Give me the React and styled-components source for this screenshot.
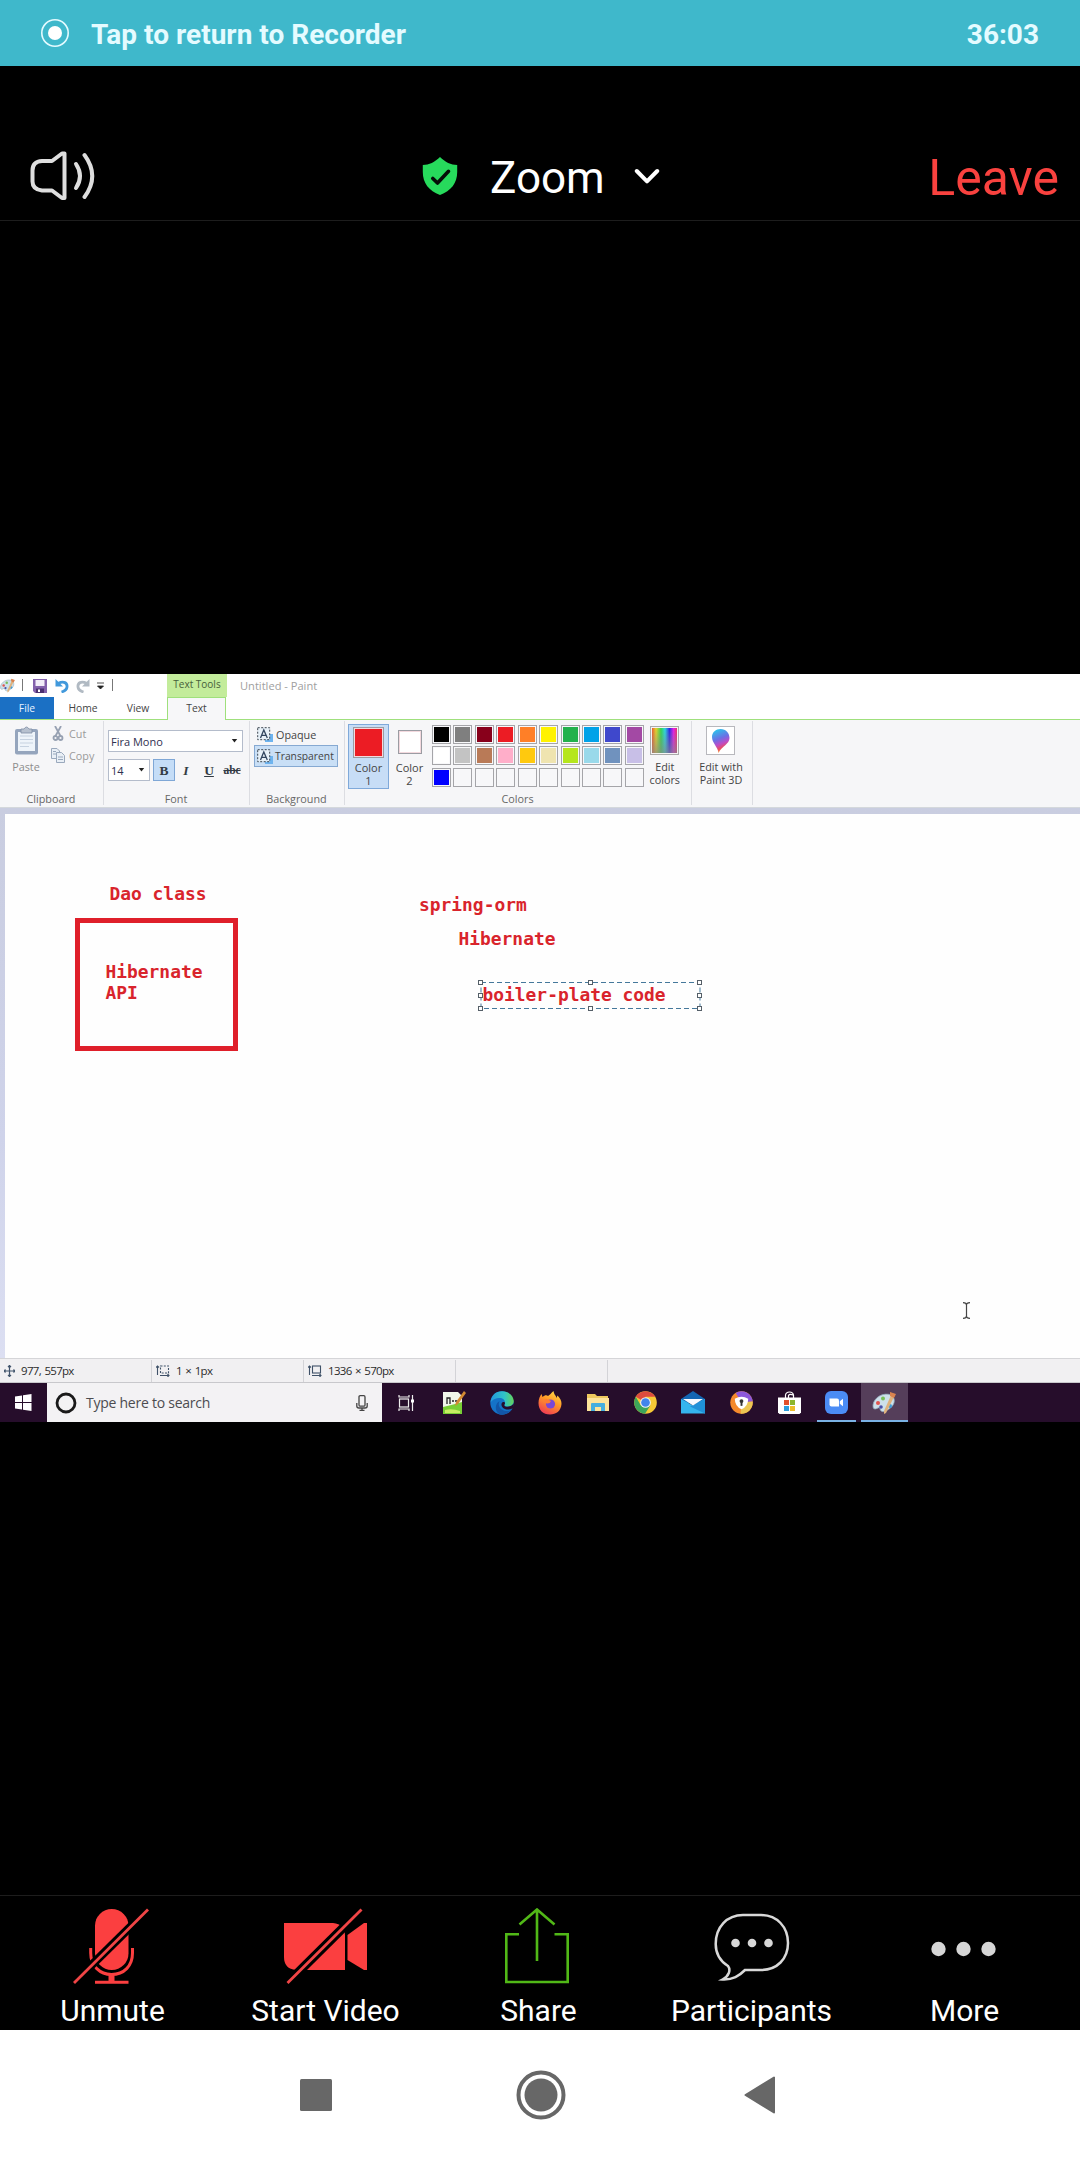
import React from 'react';
import styled, { createGlobalStyle, css } from 'styled-components';

const Global = createGlobalStyle`
  * { box-sizing: border-box; }
  body { margin: 0; background: #000; }
  svg { display: block; flex: none; }
`;

const Screen = styled.div`
  width: 1080px;
  height: 2160px;
  display: flex;
  flex-direction: column;
  background: #000;
  color: #fff;
  font-family: Roboto, sans-serif;
  overflow: hidden;
`;

/* ---------- recorder banner ---------- */
const Banner = styled.div`
  height: 66px;
  flex: none;
  display: flex;
  align-items: center;
  padding: 2px 41px 0 40px;
  background: #3fb8cb;
  color: #e4fbff;
  font-size: 28px;
  font-weight: 700;
`;
const BannerText = styled.span`
  flex: 1;
  padding-left: 21px;
  letter-spacing: 0.02px;
`;

/* ---------- meeting header ---------- */
const Header = styled.header`
  height: 155px;
  flex: none;
  display: grid;
  grid-template-columns: 300px 1fr 300px;
  align-items: center;
  padding: 66px 21px 0 29px;
  border-bottom: 1px solid #1d1d1d;
`;
const Title = styled.div`
  display: flex;
  align-items: center;
  padding-left: 93px;
  font-size: 44px;
  line-height: 50px;
`;
const TitleText = styled.span`
  padding: 4px 29px 0 32px;
`;
const Leave = styled.div`
  text-align: right;
  color: #f9423f;
  font-size: 50px;
  line-height: 58px;
  padding-top: 4px;
`;

const Gap = styled.div`
  height: ${(p) => p.$h}px;
  flex: none;
`;

/* ---------- shared Paint window ---------- */
const PaintWindow = styled.div`
  flex: none;
  color: #444;
  background: #fff;
  font-family: "Open Sans", "Noto Sans", sans-serif;
  font-size: 10.8px;
  line-height: 13px;
  white-space: nowrap;
`;
const TitleRow = styled.div`
  height: 23px;
  display: flex;
  align-items: center;
`;
const Tick = styled.i`
  width: 1px;
  height: 12px;
  background: #777;
  margin: 0 ${(p) => p.$r}px 2px ${(p) => p.$l}px;
`;
const Slot = styled.div`
  width: ${(p) => p.$w}px;
  display: flex;
  justify-content: flex-start;
`;
const ContextTitle = styled.div`
  width: 60px;
  height: 23px;
  text-align: center;
  line-height: 20px;
  font-size: 10px;
  background: #c3ec9b;
  color: #46603a;
`;
const WindowTitle = styled.div`
  padding-left: 13px;
  font-size: 11.1px;
  color: #a0a0a0;
`;
const Tabs = styled.div`
  height: 23px;
  display: flex;
  align-items: stretch;
  border-bottom: 1px solid #9fe07c;
`;
const Tab = styled.div`
  width: ${(p) => p.$w}px;
  text-align: center;
  line-height: 22px;
  font-size: 10.3px;
  ${(p) => p.$kind === 'file' && css`
    background: #1b70c4;
    color: #e5f2ff;
  `}
  ${(p) => p.$kind === 'active' && css`
    margin: 0 0 -1px 3px;
    background: #f7f7f9;
    border: 1px solid #9fe07c;
    border-bottom: 0;
    line-height: 21px;
  `}
`;
const Ribbon = styled.div`
  height: 88px;
  display: flex;
  background: #f6f6f8;
  border-bottom: 1px solid #d4d8dc;
  padding: 1px 0 2px;
`;
const Group = styled.div`
  width: ${(p) => p.$w}px;
  flex: none;
  display: flex;
  flex-direction: column;
  border-right: 1px solid #dcdde2;
`;
const GroupBody = styled.div`
  flex: 1;
  display: flex;
  gap: ${(p) => p.$gap || 0}px;
  flex-direction: ${(p) => (p.$col ? 'column' : 'row')};
  padding: ${(p) => p.$pad};
`;
const GroupLabel = styled.div`
  height: 13px;
  text-align: center;
  color: #666;
  padding-right: 1px;
`;
const ToolStack = styled.div`
  width: ${(p) => p.$w}px;
  margin-top: ${(p) => p.$mt || 0}px;
  display: flex;
  flex-direction: column;
  align-items: center;
  gap: ${(p) => p.$gap || 0}px;
  text-align: center;
  line-height: 12.5px;
  color: ${(p) => p.$color || '#444'};
`;
const SmallTools = styled.div`
  display: flex;
  flex-direction: column;
  gap: 7px;
  padding-left: 7px;
  color: #9a9a9a;
`;
const SmallTool = styled.div`
  height: 15px;
  display: flex;
  align-items: center;
  gap: 4px;
`;
const Row = styled.div`
  display: flex;
  align-items: center;
`;
const Select = styled.div`
  width: ${(p) => p.$w}px;
  height: 22px;
  display: flex;
  align-items: center;
  justify-content: space-between;
  padding: 0 4px 0 2px;
  border: 1px solid #b4bccb;
  background: #fff;
  color: #2f3050;
  font-size: 11px;
`;
const FormatButton = styled.div`
  width: ${(p) => p.$w}px;
  height: 22px;
  display: flex;
  align-items: center;
  justify-content: center;
  font-family: "Liberation Serif", serif;
  font-weight: 700;
  font-size: ${(p) => p.$size || 13.5}px;
  font-style: ${(p) => (p.$italic ? 'italic' : 'normal')};
  text-decoration: ${(p) => p.$deco || 'none'};
  color: #333b44;
  ${(p) => p.$on && css`
    background: #c5ddf7;
    border: 1px solid #7fa7d6;
    margin-left: 3px;
  `}
`;
const Choice = styled.div`
  width: 84px;
  height: 22px;
  display: flex;
  align-items: center;
  gap: ${(p) => (p.$on ? 2 : 3)}px;
  padding-left: 2px;
  border: 1px solid ${(p) => (p.$on ? '#86a9d2' : 'transparent')};
  background: ${(p) => (p.$on ? '#c9dff6' : 'transparent')};
  font-size: ${(p) => (p.$on ? 10.3 : 10.8)}px;
`;
const ColorSlot = styled.div`
  width: 41px;
  height: 65px;
  display: flex;
  flex-direction: column;
  align-items: center;
  text-align: center;
  line-height: 12.5px;
  font-size: 11px;
  border: 1px solid ${(p) => (p.$on ? '#7fa9da' : 'transparent')};
  background: ${(p) => (p.$on ? '#c7ddf6' : 'transparent')};
`;
const BigSwatch = styled.div`
  width: ${(p) => p.$s}px;
  height: ${(p) => p.$s}px;
  margin: ${(p) => p.$m};
  border: 1px solid #9b9ca3;
  background: ${(p) => p.$c};
  box-shadow: inset 0 0 0 1px #f3d9de;
`;
const Palette = styled.div`
  display: grid;
  grid-template-columns: repeat(10, 19px);
  grid-auto-rows: 19px;
  gap: 2.43px;
  margin: 1px 2px 0 2px;
  align-content: start;
`;
const Swatch = styled.div`
  border: 1px solid #a5a5a9;
  background: ${(p) => p.$c};
  box-shadow: inset 0 0 0 1px #f8f8fa;
`;
const Workspace = styled.div`
  position: relative;
  height: 550px;
  padding: 6px 0 0 5px;
  background: linear-gradient(#c9cde0, #cfd3ea 60%, #dcdff2);
`;
const Sheet = styled.div`
  height: 100%;
  background: #fefefe;
`;
const CanvasText = styled.div`
  position: absolute;
  left: ${(p) => p.$x}px;
  top: ${(p) => p.$y}px;
  font: 700 17.9px/21.5px "DejaVu Sans Mono", monospace;
  color: #d9242c;
  white-space: pre;
`;
const CanvasBox = styled.div`
  position: absolute;
  left: 75px;
  top: 110px;
  width: 163px;
  height: 133px;
  border: 5px solid #df1f2a;
`;
const Overlay = styled.svg`
  position: absolute;
  left: ${(p) => p.$x}px;
  top: ${(p) => p.$y}px;
`;
const StatusBar = styled.div`
  height: 25px;
  display: flex;
  align-items: center;
  background: #f1f0f2;
  border-top: 1px solid #d5d5d8;
  border-bottom: 1px solid #c8c8cc;
  color: #2c2c2c;
  font-size: 11.5px;
  letter-spacing: -0.7px;
  word-spacing: 1.2px;
`;
const StatusCell = styled.div`
  width: ${(p) => p.$w}px;
  height: 22px;
  display: flex;
  align-items: center;
  gap: 6px;
  padding-left: 4px;
  border-right: 1px solid #d3d3d7;
`;
const Taskbar = styled.div`
  height: 39px;
  display: flex;
  background: #260d2b;
`;
const StartButton = styled.div`
  width: 47px;
  display: grid;
  place-items: center;
`;
const Search = styled.div`
  width: 335px;
  display: flex;
  align-items: center;
  padding: 0 14px 0 8px;
  background: #f3f2f4;
  color: #4c4c50;
  font-size: 14px;
  letter-spacing: -0.25px;
`;
const SearchText = styled.span`
  flex: 1;
  padding-left: 9px;
`;
const TaskItem = styled.div`
  width: ${(p) => p.$w || 47.9}px;
  display: grid;
  place-items: center;
  background: ${(p) => (p.$on ? '#553e5a' : 'transparent')};
  box-shadow: ${(p) => (p.$running ? 'inset 0 -2px #7ab2e4' : 'none')};
  margin: 0 ${(p) => p.$m || 0}px;
`;

/* ---------- meeting controls ---------- */
const Controls = styled.div`
  height: 135px;
  flex: none;
  display: flex;
  padding: 12px 9px 0 6px;
  border-top: 1px solid #1d1d1d;
`;
const Control = styled.div`
  width: 213px;
  display: flex;
  flex-direction: column;
  align-items: center;
  font-size: 30px;
  line-height: 36px;
`;
const ControlIcon = styled.div`
  padding-right: ${(p) => p.$nudge}px;
`;
const ControlLabel = styled.span`
  margin-top: 9px;
`;
const NavBar = styled.nav`
  flex: 1;
  display: flex;
  align-items: center;
  justify-content: center;
  background: #fff;
  padding: 0 9px 0 0;
`;
const NavButton = styled.div`
  width: ${(p) => p.$w}px;
  display: flex;
  justify-content: center;
`;

/* ---------- icons ---------- */
const RecordIcon = () => (
  <svg width="30" height="30" viewBox="0 0 30 30">
    <circle cx="15" cy="14" r="13.2" fill="none" stroke="#e4fbff" strokeWidth="1.6" />
    <circle cx="15" cy="14" r="7" fill="#fff" />
  </svg>
);
const SpeakerIcon = () => (
  <svg width="68" height="54" viewBox="0 0 68 54" fill="none" stroke="#dedede" strokeWidth="4" strokeLinecap="round" strokeLinejoin="round">
    <path d="M35.500 4.500 L33 4.500 L23 12 L13 12 Q3.500 12.500 3.500 21.500 L3.500 32.500 Q3.500 40.500 13 41.500 L23 41.500 L33 49 L35.500 49 Z" />
    <path d="M47 15 Q55 27 47 39" />
    <path d="M55.500 6 Q71 27 55.500 48" />
  </svg>
);
const ShieldIcon = () => (
  <svg width="36" height="38" viewBox="0 0 36 38">
    <path d="M18 0 C13 5 7 8 .8 8 V15 C.8 26 7 34 18 38 C29 34 35.200 26 35.200 15 V8 C29 8 23 5 18 0Z" fill="#27da5c" />
    <path d="M10.800 21.500 L15.500 26 L26.500 14.300" fill="none" stroke="#050d07" strokeWidth="3.600" strokeLinecap="round" strokeLinejoin="round" />
  </svg>
);
const ChevronIcon = () => (
  <svg width="26" height="18" viewBox="0 0 26 18">
    <path d="M2.800 4 L13 14.300 L23.200 4" fill="none" stroke="#fff" strokeWidth="4" strokeLinecap="round" strokeLinejoin="round" />
  </svg>
);
const Caret = () => (
  <svg width="7" height="4" viewBox="0 0 7 4"><path d="M.8 0H6.200L3.500 3.500Z" fill="#222" /></svg>
);
const PaletteIcon = ({ w = 24, h = 24, cut = 0 }) => (
  <svg width={w} height={h} viewBox={`${cut} 0 ${24 - cut} 24`}>
    <path d="M1 14 C2 6 12 1 19 4 C25 8 22 15 17 18 C13 21 9 22 8 18 C8 15 5 18 3 18 C1 18 1 16 1 14Z" fill="#cde0ea" stroke="#8ba5b5" strokeWidth=".8" />
    <circle cx="6" cy="12" r="2" fill="#e2564f" />
    <circle cx="11" cy="7.500" r="2" fill="#78bf59" />
    <circle cx="9" cy="16" r="1.800" fill="#4a4fa8" />
    <circle cx="18" cy="15" r="2" fill="#3d9bd8" />
    <path d="M20 2 L23 4 L14 22 L12 23 L12 20Z" fill="#dfb27d" />
    <path d="M18 1 L24 3 L22 7 L18 5Z" fill="#d9834f" />
  </svg>
);
const SaveIcon = () => (
  <svg width="14" height="14" viewBox="0 0 14 14">
    <path d="M0 0H14V14H2L0 12Z" fill="#8361ab" /><path d="M2.500 1H11.500V7H2.500Z" fill="#f2edf8" /><path d="M3 9.500H11V14H3Z" fill="#4b3070" /><path d="M5 10.500H7V13H5Z" fill="#fff" />
  </svg>
);
const UndoIcon = ({ flip }) => (
  <svg width="14" height="14" viewBox="0 0 14 14">
    <g transform={flip ? 'matrix(-1 0 0 1 14 0)' : undefined} fill="none" stroke={flip ? '#b1bac3' : '#4199dc'}>
      <path d="M3 4.500 C9 1.500 12.500 4 12 8 C11.700 10.500 10 12 6.500 13" strokeWidth="2.800" />
      <path d="M.5 0 V7.500 H8Z" stroke="none" fill={flip ? '#b1bac3' : '#4199dc'} />
    </g>
  </svg>
);
const ClipboardIcon = () => (
  <svg width="25" height="30" viewBox="0 0 25 30">
    <rect x="1" y="3" width="23" height="25.500" rx="2" fill="#95a5bd" />
    <rect x="4" y="6" width="17" height="19" fill="#eef4fa" />
    <path d="M6 10H19M6 13.500H19M6 17H19M6 20.500H15" stroke="#c6d2e0" />
    <path d="M7 7V3H10Q12.500 -1 15 3H18V7Z" fill="#b7c1cf" stroke="#7f8da3" strokeWidth=".8" />
  </svg>
);
const ScissorsIcon = () => (
  <svg width="14" height="15" viewBox="0 0 14 15" fill="none" stroke="#97a1b2" strokeWidth="1.800">
    <path d="M4 0 L9.500 10 M10 0 L4.500 10" /><circle cx="4.500" cy="12" r="2" /><circle cx="9.500" cy="12" r="2" />
  </svg>
);
const CopyIcon = () => (
  <svg width="14" height="15" viewBox="0 0 14 15" fill="#e9eff6" stroke="#9aa9bd" strokeWidth="1">
    <path d="M.5 .5H6L8.500 3V10.500H.5Z" /><path d="M5.500 4.500H10.500L13.500 7.500V14.500H5.500Z" /><path d="M2 3.500H5M2 6H5M7 9H12M7 11.500H12" />
  </svg>
);
const BackgroundIcon = () => (
  <svg width="16" height="15" viewBox="0 0 16 15">
    <rect x="8" y="7" width="8" height="8" fill="#6eb4ef" />
    <rect x=".7" y=".7" width="12" height="12" fill="#e8f1f8" stroke="#3c4650" strokeDasharray="2 1.500" />
    <path d="M3.500 11 L6.800 3 L10.300 11 M4.700 8.400H9" fill="none" stroke="#33465f" strokeWidth="1.300" />
  </svg>
);
const SpectrumIcon = () => (
  <svg width="29" height="30" viewBox="0 0 29 30">
    <defs>
      <linearGradient id="hue"><stop stopColor="#ef5b2d" /><stop offset=".16" stopColor="#e6d32b" /><stop offset=".36" stopColor="#31d651" /><stop offset=".52" stopColor="#2ad8e0" /><stop offset=".7" stopColor="#2d24e8" /><stop offset=".86" stopColor="#e31de8" /><stop offset="1" stopColor="#ee2d6a" /></linearGradient>
      <linearGradient id="fade" x2="0" y2="1"><stop stopColor="#888" stopOpacity="0" /><stop offset="1" stopColor="#888" stopOpacity=".7" /></linearGradient>
    </defs>
    <rect x=".5" y=".5" width="28" height="28" fill="#f4f4f4" stroke="#aaa" />
    <rect x="2" y="2" width="25" height="25" fill="url(#hue)" /><rect x="2" y="2" width="25" height="25" fill="url(#fade)" />
  </svg>
);
const Paint3DIcon = () => (
  <svg width="30" height="30" viewBox="0 0 30 30">
    <defs><linearGradient id="drop" x1=".3" x2=".6" y2="1"><stop stopColor="#29c5ec" /><stop offset=".4" stopColor="#6b70e5" /><stop offset=".62" stopColor="#bd4cc8" /><stop offset=".8" stopColor="#e94c60" /><stop offset="1" stopColor="#f7c52d" /></linearGradient></defs>
    <rect x=".5" y=".5" width="28" height="28" fill="#fff" stroke="#b8b8bd" />
    <path d="M14.500 3 C20 3 23.500 7 23.500 12 C23.500 18 16 20 12.500 27 C12 21 6 17 6 11 C6 6 10 3 14.500 3Z" fill="url(#drop)" />
  </svg>
);
const MoveIcon = () => (
  <svg width="11" height="12" viewBox="0 0 11 12" stroke="#41546c" strokeWidth="1.200" fill="none"><path d="M5.500 .5V11.500M0 6H11M4 2L5.500 .5L7 2M4 10L5.500 11.500L7 10M1.500 4.500L0 6L1.500 7.500M9.500 4.500L11 6L9.500 7.500" /></svg>
);
const SizeIcon = ({ dashed }) => (
  <svg width="14" height="12" viewBox="0 0 14 12" stroke="#3f5168" strokeWidth="1.100" fill="none"><path d="M1.500 10V1M0 2.500L1.500 1L3 2.500M4 10.500H13M11.500 9L13 10.500L11.500 12" /><rect x="4.500" y="1" width="8" height="7" strokeDasharray={dashed ? '2 1.300' : undefined} /></svg>
);
const WindowsIcon = () => (
  <svg width="17" height="17" viewBox="0 0 17 17" fill="#fff"><path d="M0 2.500L7 1.500V8H0ZM8 1.300L16.500 0V8H8ZM0 9H7V15.500L0 14.500ZM8 9H16.500V17L8 15.700Z" /></svg>
);
const CortanaIcon = () => (
  <svg width="22" height="22" viewBox="0 0 22 22"><circle cx="11" cy="11" r="9" fill="none" stroke="#1a1a1a" strokeWidth="2.800" /></svg>
);
const SearchMicIcon = () => (
  <svg width="12" height="16" viewBox="0 0 12 16" fill="none" stroke="#444" strokeWidth="1.300"><rect x="3" y=".7" width="6" height="10.500" rx="1.200" /><path d="M.8 8V11Q.8 13 3 13H9Q11.200 13 11.200 11V8M6 13V15.500M3.500 15.300H8.500" /></svg>
);
const TaskViewIcon = () => (
  <svg width="17" height="16" viewBox="0 0 17 16" fill="none" stroke="#eee" strokeWidth="1.200"><rect x="1.500" y="4" width="9" height="8" /><path d="M1 0V2H11V0M1 16V14H11V16M14.500 0V16" /><path d="M13 4.500H16V7.500H13Z" fill="#fff" stroke="none" /></svg>
);
const NotepadIcon = () => (
  <svg width="24" height="25" viewBox="0 0 24 25"><path d="M1 2H16L20 6V24H1Z" fill="#f1f6ea" /><path d="M1 17Q10 15 20 12V24H1Z" fill="#79cf35" /><path d="M3 20Q10 18 18 21V23H3Z" fill="#c6ee62" /><path d="M5 14V8H8V14M10 11H12M13 11H15.500" stroke="#222" strokeWidth="1.300" fill="none" /><path d="M22 1L24 3L16 14L13 16L14 12Z" fill="#d28a32" /></svg>
);
const EdgeIcon = () => (
  <svg width="24" height="24" viewBox="0 0 24 24">
    <defs><linearGradient id="edgeTop"><stop stopColor="#2497dc" /><stop offset=".6" stopColor="#2fc3c8" /><stop offset="1" stopColor="#65d35a" /></linearGradient></defs>
    <circle cx="12" cy="12" r="11.700" fill="#1473c8" />
    <path d="M.5 12 C1 4 6 .3 12 .3 C19 .3 23.700 5 23.700 10 C23.700 14 20 16 16.500 15.500 C14 15.200 14 14 15 12.500 C15.500 9 12.500 6.500 8.500 7 C4 7.500 1 10 .5 12Z" fill="url(#edgeTop)" />
    <path d="M10 23.500 C4 21 5 12 9.500 10.300 C7 15 11 20 17 20 C19.500 20 21.500 19 22.500 17.500 C20 22 15 24 10 23.500Z" fill="#1256a8" />
    <path d="M15 12.500 C14 14 14 15.400 16.500 15.700 C20 16 22 14.500 23.700 12.500 C24 15 23.300 16.500 22.800 17.300 C18 20 11 18 11.500 13 C12 10.500 15 10.500 15 12.500Z" fill="#260d2b" />
  </svg>
);
const FirefoxIcon = () => (
  <svg width="24" height="25" viewBox="0 0 24 25">
    <defs><linearGradient id="fox" x1=".8" x2=".3" y2="1"><stop stopColor="#ffe14a" /><stop offset=".45" stopColor="#ff9826" /><stop offset="1" stopColor="#f03a55" /></linearGradient></defs>
    <path d="M15.500 1 C16 5 18 5 18.500 8 L19.500 5.500 C22 8 23.700 11 23.500 14 C23 21 18 24.500 12 24.500 C5 24.500 .5 20 .5 13 C.5 9 2 6 3.500 4 L4.500 7 C7 4.500 9 5 10 6 C12 5 13 3 15.500 1Z" fill="url(#fox)" />
    <circle cx="12.500" cy="14" r="4.600" fill="#7a48d5" /><path d="M5.500 10 Q9 8 13 11 Q12 14 8.500 13.500Z" fill="#ff7d32" />
  </svg>
);
const FolderIcon = () => (
  <svg width="22" height="19" viewBox="0 0 22 19"><path d="M0 1H8L10 3H21V17H0Z" fill="#eec85e" /><path d="M0 5H22V18H0Z" fill="#fde39a" /><path d="M4 18V11Q4 10 5 10H17Q18 10 18 11V18H14V14H8V18Z" fill="#45aede" /></svg>
);
const ChromeIcon = () => (
  <svg width="23" height="23" viewBox="0 0 24 24"><circle cx="12" cy="12" r="11.800" fill="#f6c936" /><path d="M12 12L1.800 6.100A11.800 11.800 0 0 1 22.200 6.100H12Z" fill="#dd4b3e" /><path d="M1.800 6.100A11.800 11.800 0 0 0 11.500 23.800L17 15L12 12L7 14.800Z" fill="#3ca55a" /><circle cx="12" cy="12" r="5.600" fill="#f3f3f3" /><circle cx="12" cy="12" r="4.500" fill="#4285eb" /></svg>
);
const MailIcon = () => (
  <svg width="24" height="23" viewBox="0 0 24 23"><path d="M0 8L12 0L24 8V12H0Z" fill="#1266b2" /><path d="M0 8L12 14.500L24 8V22.500H0Z" fill="#35b5ee" /><path d="M24 8L9 15.500L24 22.500Z" fill="#1f91d8" /><path d="M2 8H22L12 14.500Z" fill="#f5faff" /></svg>
);
const GuardIcon = () => (
  <svg width="23" height="23" viewBox="0 0 24 24"><circle cx="12" cy="12" r="11.700" fill="#f58a2c" /><path d="M6 2A11.700 11.700 0 0 1 23.700 11L12 12Z" fill="#8d58db" /><path d="M23.700 11A11.700 11.700 0 0 1 11 23.700L12 12Z" fill="#ecc653" /><path d="M5 8Q12 4 19 8Q19 16 12 19Q5 16 5 8Z" fill="#fff" /><circle cx="12" cy="10.500" r="2" fill="#333" /><path d="M11 11H13V15.500H11Z" fill="#333" /></svg>
);
const StoreIcon = () => (
  <svg width="23" height="24" viewBox="0 0 23 24"><path d="M7.500 7V4Q8 1 11.500 1Q15 1 15.500 4V7M10.500 7V4.500Q11.500 2.500 15 4" fill="none" stroke="#fff" strokeWidth="1.200" /><path d="M0 6.500H23V21.500L21.500 23H1.500L0 21.500Z" fill="#fff" /><path d="M6 9H11V14H6Z" fill="#e1502b" /><path d="M12 9H17V14H12Z" fill="#8cb52c" /><path d="M6 15H11V20H6Z" fill="#2b9ddd" /><path d="M12 15H17V20H12Z" fill="#edbd2b" /></svg>
);
const ZoomIcon = () => (
  <svg width="23" height="23" viewBox="0 0 23 23"><rect width="23" height="23" rx="6" fill="#4b8cf5" /><path d="M4.500 7.500H12Q14 7.500 14 9.500V15.500H6.500Q4.500 15.500 4.500 13.500Z" fill="#fff" /><path d="M14.800 10.300L18 7.800V15.200L14.800 12.800Z" fill="#fff" /></svg>
);
const MutedMicIcon = () => (
  <svg width="76" height="76" viewBox="0 0 76 76">
    <rect x="22" y="1" width="33.500" height="61" rx="16.700" fill="#fb3f40" />
    <g fill="none" stroke="#fb3f40">
      <path d="M17.700 40V45C17.700 58 27 66.500 38.500 66.500C51 66.500 59.500 58 59.500 45V40" strokeWidth="3" />
      <path d="M38.500 66V74" strokeWidth="6" />
    </g>
    <path d="M5 70.500L71 5.500" stroke="#000" strokeWidth="8.500" />
    <path d="M1 75L75 1.500" stroke="#f04546" strokeWidth="2.800" />
    <path d="M22 74.300H55.500" stroke="#fb3f40" strokeWidth="3" />
  </svg>
);
const VideoOffIcon = () => (
  <svg width="84" height="76" viewBox="0 0 84 76">
    <path d="M0 15H49Q61 16 61 27V62H12Q0 61 0 49Z" fill="#fb3f40" />
    <path d="M3.500 75L77.500 1.500" stroke="#000" strokeWidth="9" />
    <path d="M63.500 27L80 15H83V62H80L63.500 52Z" fill="#fb3f40" />
    <path d="M3.500 75L77.500 1.500" stroke="#f04546" strokeWidth="2.800" />
  </svg>
);
const ShareIcon = () => (
  <svg width="64" height="76" viewBox="0 0 64 76" fill="none" stroke="#51b817" strokeWidth="2.600"><path d="M14 26.300H1.300V74H62.700V26.300H49.500M32 53V1.500M14.500 16.500L32 1.500L49.500 16.500" /></svg>
);
const ChatIcon = () => (
  <svg width="76" height="76" viewBox="0 0 76 76" fill="none" stroke="#d8d8d8" strokeWidth="2.500">
    <path d="M29 7H47C63 7 74 19 74 35C74 51 63 62 47 62H31C25 68 19 72 8.500 71.500C15 68 17 62 14 58C6 53 1.700 45 1.700 36C1.700 19 13 7 29 7Z" />
    <g fill="#d8d8d8" stroke="none"><circle cx="21.500" cy="35" r="4.300" /><circle cx="38" cy="35" r="4.300" /><circle cx="54.500" cy="35" r="4.300" /></g>
  </svg>
);
const MoreIcon = () => (
  <svg width="66" height="76" viewBox="0 0 66 76" fill="#d6d6d6"><circle cx="7.500" cy="41" r="7.200" /><circle cx="32.500" cy="41" r="7.200" /><circle cx="57.500" cy="41" r="7.200" /></svg>
);

const COLORS = [
  '#000000', '#7f7f7f', '#88001b', '#ec1c24', '#ff7f27', '#fff200', '#22b14c', '#00a2e8', '#3f48cc', '#a349a4',
  '#ffffff', '#c3c3c3', '#b97a57', '#ffaec9', '#ffc90e', '#efe4b0', '#b5e61d', '#99d9ea', '#7092be', '#c8bfe7',
  '#0000ff', ...Array(9).fill('#f7f7f9'),
];
const APPS = [NotepadIcon, EdgeIcon, FirefoxIcon, FolderIcon, ChromeIcon, MailIcon, GuardIcon, StoreIcon];
const CONTROLS = [
  ['Unmute', MutedMicIcon, 2.5],
  ['Start Video', VideoOffIcon, 0],
  ['Share', ShareIcon, 3],
  ['Participants', ChatIcon, 0],
  ['More', MoreIcon, 2],
];
const HANDLES = [[3, 3], [113, 3], [222, 3], [3, 16], [222, 16], [3, 29], [113, 29], [222, 29]];

export default function App() {
  return (
    <Screen>
      <Global />
      <Banner>
        <RecordIcon />
        <BannerText>Tap to return to Recorder</BannerText>
        <span>36:03</span>
      </Banner>
      <Header>
        <SpeakerIcon />
        <Title>
          <ShieldIcon />
          <TitleText>Zoom</TitleText>
          <ChevronIcon />
        </Title>
        <Leave>Leave</Leave>
      </Header>
      <Gap $h={453} />

      <PaintWindow>
        <TitleRow>
          <Slot $w={16}><PaletteIcon w={16} h={15} cut={2} /></Slot>
          <Tick $l={6} $r={10} />
          <Slot $w={22}><SaveIcon /></Slot>
          <Slot $w={21}><UndoIcon /></Slot>
          <Slot $w={21}><UndoIcon flip /></Slot>
          <svg width="7" height="8" viewBox="0 0 7 8"><path d="M0 1H7M.5 4H6.500L3.500 7Z" fill="#222" stroke="#222" strokeWidth=".8" /></svg>
          <Tick $l={8} $r={54} />
          <ContextTitle>Text Tools</ContextTitle>
          <WindowTitle>Untitled - Paint</WindowTitle>
        </TitleRow>
        <Tabs>
          <Tab $w={54} $kind="file">File</Tab>
          <Tab $w={58}>Home</Tab>
          <Tab $w={52}>View</Tab>
          <Tab $w={59} $kind="active">Text</Tab>
        </Tabs>
        <Ribbon>
          <Group $w={104}>
            <GroupBody $pad="5px 0 0 8px">
              <ToolStack $w={36} $gap={5} $color="#8d8d8d"><ClipboardIcon /><span>Paste</span></ToolStack>
              <SmallTools>
                <SmallTool><ScissorsIcon />Cut</SmallTool>
                <SmallTool><CopyIcon />Copy</SmallTool>
              </SmallTools>
            </GroupBody>
            <GroupLabel>Clipboard</GroupLabel>
          </Group>
          <Group $w={146}>
            <GroupBody $col $gap={7} $pad="9px 0 0 4px">
              <Select $w={135}>Fira Mono<Caret /></Select>
              <Row>
                <Select $w={42}>14<Caret /></Select>
                <FormatButton $w={22} $on>B</FormatButton>
                <FormatButton $w={22} $italic>I</FormatButton>
                <FormatButton $w={24} $deco="underline">U</FormatButton>
                <FormatButton $w={22} $size={11.5} $deco="line-through">abc</FormatButton>
              </Row>
            </GroupBody>
            <GroupLabel>Font</GroupLabel>
          </Group>
          <Group $w={95}>
            <GroupBody $col $pad="2px 0 0 4px">
              <Choice><BackgroundIcon />Opaque</Choice>
              <Choice $on><BackgroundIcon />Transparent</Choice>
            </GroupBody>
            <GroupLabel>Background</GroupLabel>
          </Group>
          <Group $w={347}>
            <GroupBody $pad="3px 0 0 3px">
              <ColorSlot $on><BigSwatch $c="#ec1c24" $s={31} $m="2px 0 4px" />Color<br />1</ColorSlot>
              <ColorSlot><BigSwatch $c="#ffffff" $s={24} $m="5px 0 8px" />Color<br />2</ColorSlot>
              <Palette>{COLORS.map((c, i) => <Swatch key={i} $c={c} />)}</Palette>
              <ToolStack $w={38} $gap={5} $mt={2}><SpectrumIcon /><span>Edit<br />colors</span></ToolStack>
            </GroupBody>
            <GroupLabel>Colors</GroupLabel>
          </Group>
          <Group $w={61}>
            <GroupBody $pad="5px 0 0 3px">
              <ToolStack $w={52} $gap={5}><Paint3DIcon /><span>Edit with<br />Paint 3D</span></ToolStack>
            </GroupBody>
          </Group>
        </Ribbon>
        <Workspace>
          <Sheet />
          <CanvasText $x={109.5} $y={74.5}>Dao class</CanvasText>
          <CanvasBox />
          <CanvasText $x={105.5} $y={152.5}>{'Hibernate\nAPI'}</CanvasText>
          <CanvasText $x={419} $y={86}>spring-orm</CanvasText>
          <CanvasText $x={458.5} $y={120}>Hibernate</CanvasText>
          <CanvasText $x={482.5} $y={176}>boiler-plate code</CanvasText>
          <Overlay $x={478} $y={171} width="226" height="33" viewBox="0 0 226 33">
            <rect x="3" y="3.500" width="219" height="26" fill="none" stroke="#45789b" strokeDasharray="5 3" />
            {HANDLES.map(([x, y]) => <rect key={`${x}-${y}`} x={x - 2.5} y={y - 1.5} width="4" height="4" fill="#fff" stroke="#555f68" />)}
          </Overlay>
          <Overlay $x={962} $y={494} width="9" height="17" viewBox="0 0 9 17">
            <path d="M1 .7Q4.500 .7 4.500 3V14Q4.500 16.300 1 16.300M8 .7Q4.500 .7 4.500 3M8 16.300Q4.500 16.300 4.500 14" fill="none" stroke="#444" strokeWidth="1.200" />
          </Overlay>
        </Workspace>
        <StatusBar>
          <StatusCell $w={152}><MoveIcon />977, 557px</StatusCell>
          <StatusCell $w={152}><SizeIcon dashed />1 × 1px</StatusCell>
          <StatusCell $w={152}><SizeIcon />1336 × 570px</StatusCell>
          <StatusCell $w={152} />
        </StatusBar>
        <Taskbar>
          <StartButton><WindowsIcon /></StartButton>
          <Search>
            <CortanaIcon />
            <SearchText>Type here to search</SearchText>
            <SearchMicIcon />
          </Search>
          <TaskItem $w={48}><TaskViewIcon /></TaskItem>
          {APPS.map((Icon, i) => <TaskItem key={i}><Icon /></TaskItem>)}
          <TaskItem $w={39} $m={4.2} $running><ZoomIcon /></TaskItem>
          <TaskItem $w={47} $on $running><PaletteIcon /></TaskItem>
        </Taskbar>
      </PaintWindow>

      <Gap $h={473} />
      <Controls>
        {CONTROLS.map(([label, Icon, nudge]) => (
          <Control key={label}>
            <ControlIcon $nudge={nudge}><Icon /></ControlIcon>
            <ControlLabel>{label}</ControlLabel>
          </Control>
        ))}
      </Controls>
      <NavBar>
        <NavButton $w={224}>
          <svg width="32" height="32" viewBox="0 0 32 32"><rect width="32" height="32" rx="1.500" fill="#676767" /></svg>
        </NavButton>
        <NavButton $w={225}>
          <svg width="50" height="50" viewBox="0 0 50 50"><circle cx="25" cy="25" r="22.500" fill="none" stroke="#676767" strokeWidth="4" /><circle cx="25" cy="25" r="16.500" fill="#676767" /></svg>
        </NavButton>
        <NavButton $w={214}>
          <svg width="32" height="38" viewBox="0 0 32 38"><path d="M1.500 19L30 1.500V36.500Z" fill="#676767" stroke="#676767" strokeWidth="2" strokeLinejoin="round" /></svg>
        </NavButton>
      </NavBar>
    </Screen>
  );
}
